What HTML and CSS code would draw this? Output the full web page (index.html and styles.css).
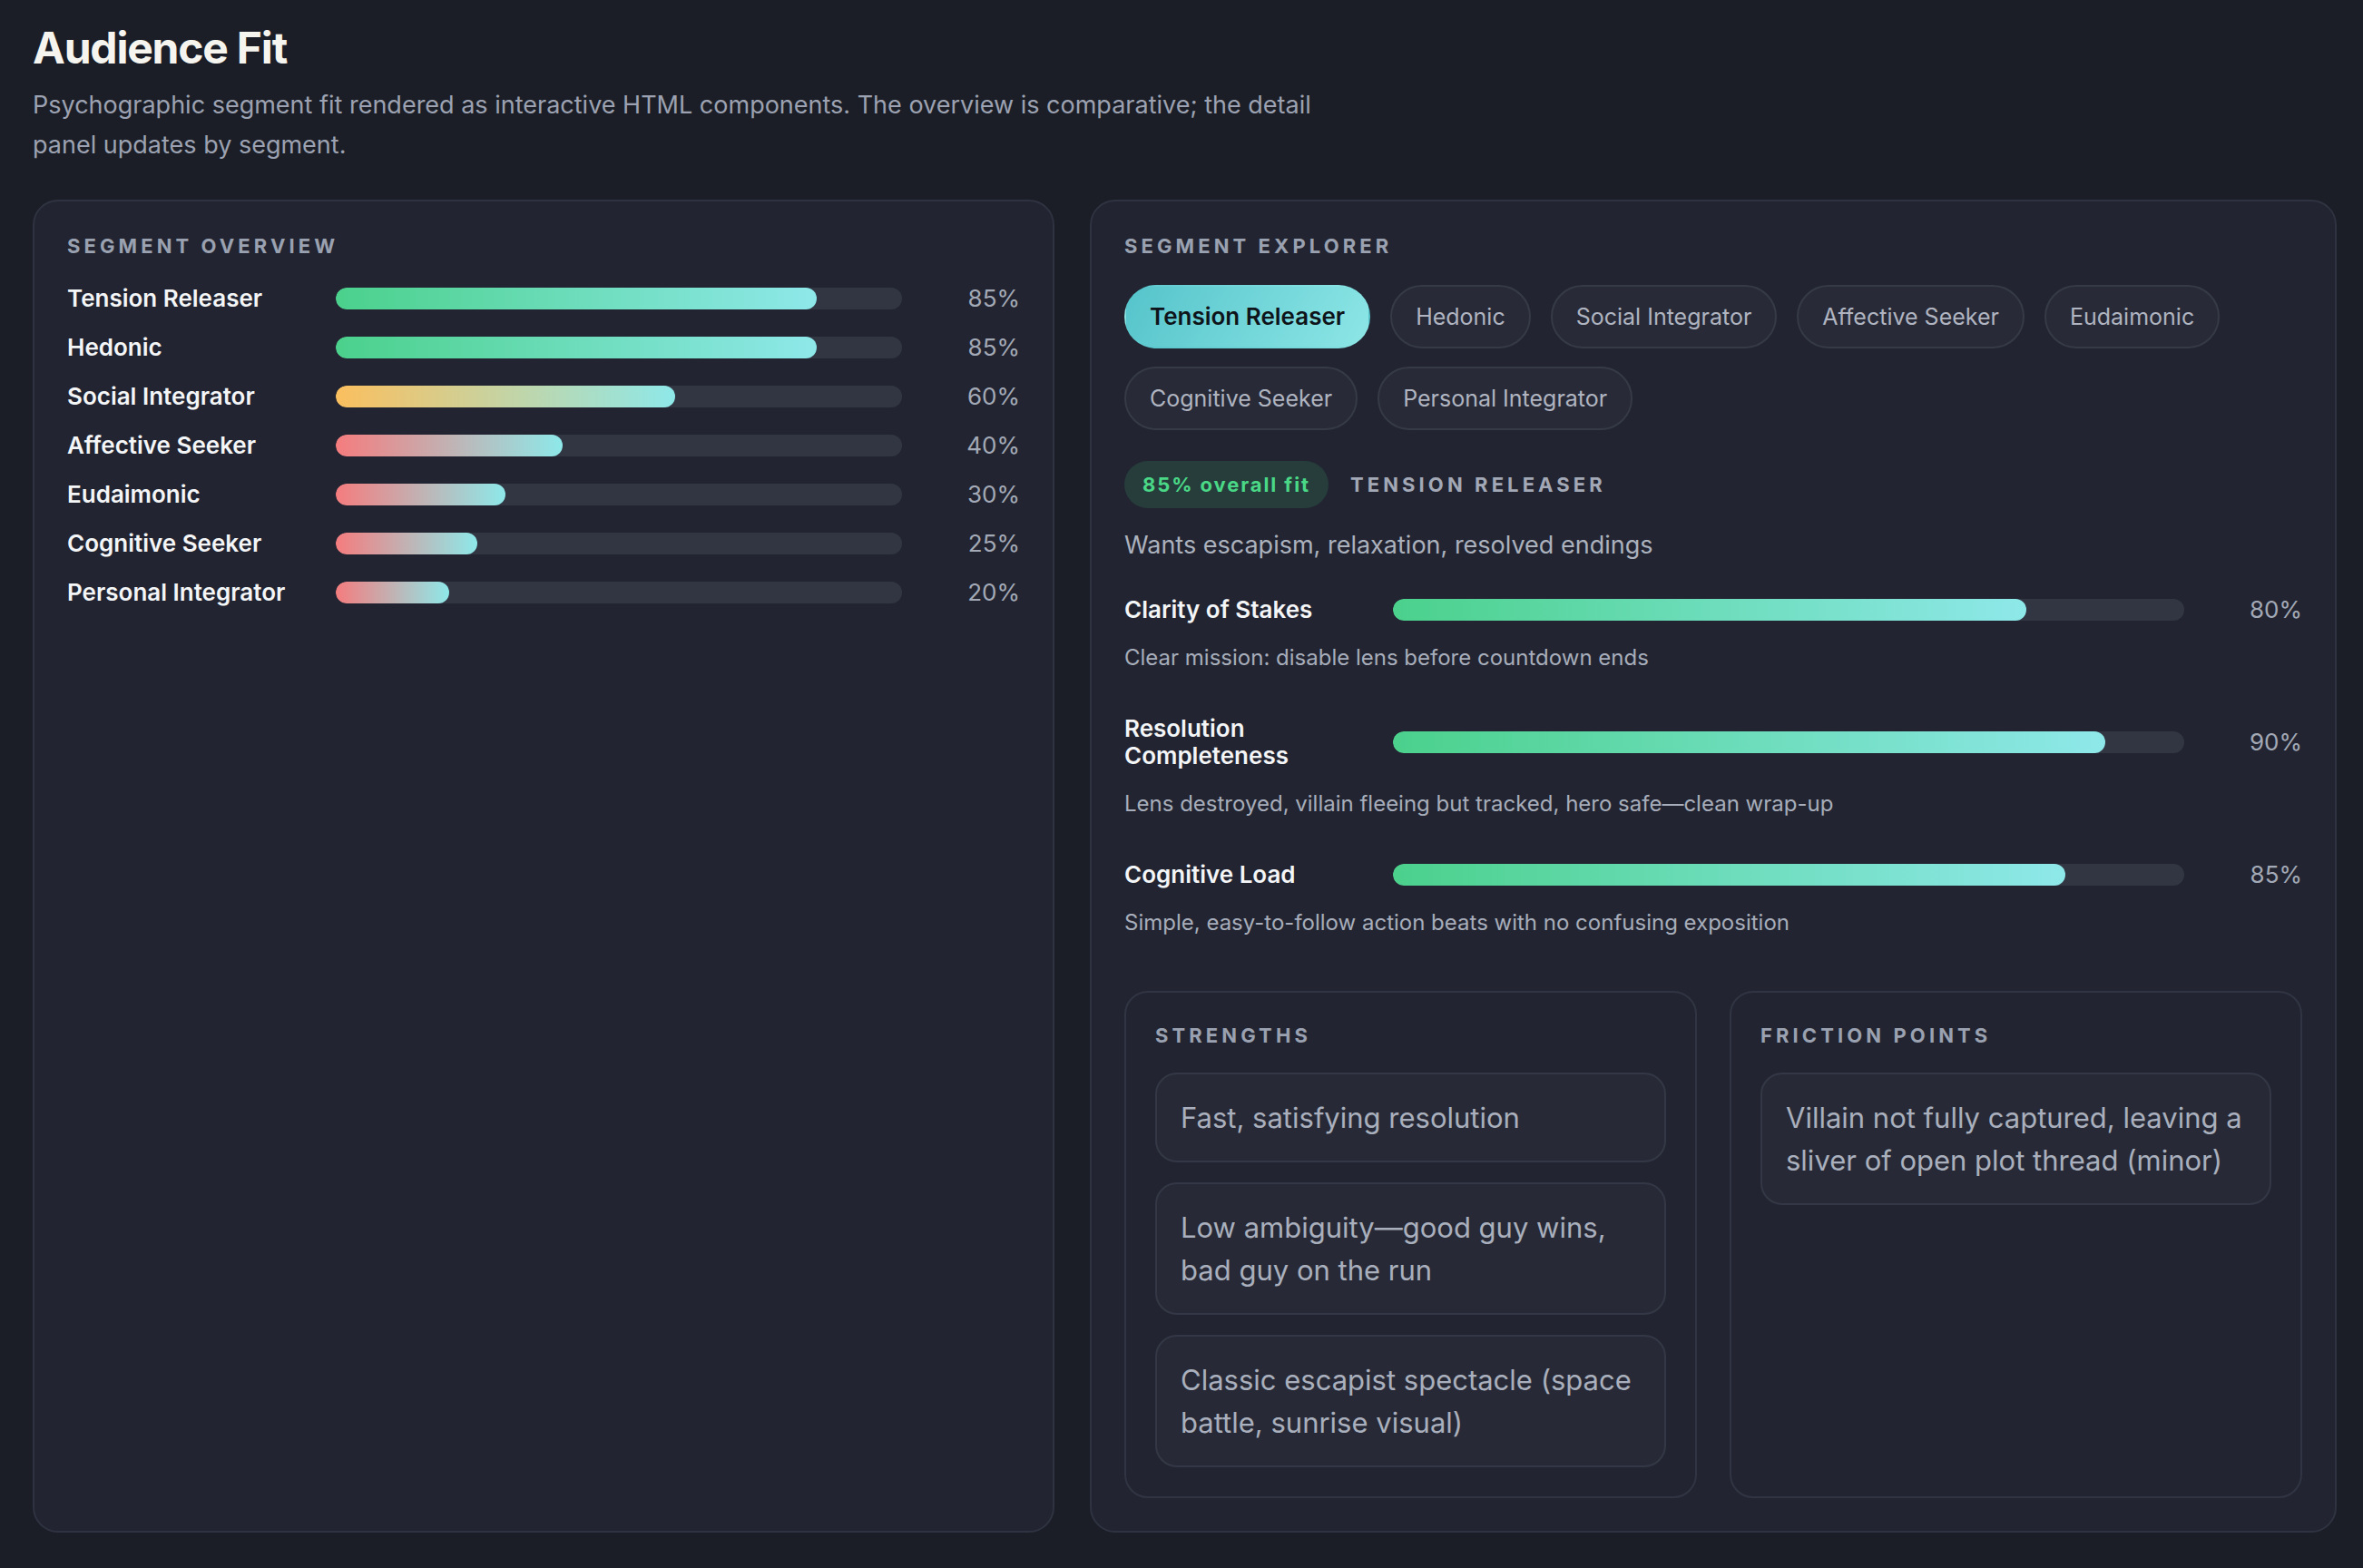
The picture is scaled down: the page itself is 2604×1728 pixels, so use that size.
FILE: index.html
```html
<!DOCTYPE html>
<html lang="en">

<head>
    <meta charset="utf-8">
    <title>Audience Fit</title>
    <link rel="stylesheet" href="styles.css">
</head>

<body>
    <header class="intro">
        <h1>Audience Fit</h1>
        <p>Psychographic segment fit rendered as interactive HTML components. The overview is comparative; the detail panel updates by segment.</p>
    </header>

    <main class="panels">
        <section class="panel">
            <h2 class="label">Segment Overview</h2>
            <div class="rows">
                <div class="row">
                    <span class="name">Tension Releaser</span>
                    <div class="track"><div class="fill hi" style="width:85%"></div></div>
                    <span class="pct">85%</span>
                </div>
                <div class="row">
                    <span class="name">Hedonic</span>
                    <div class="track"><div class="fill hi" style="width:85%"></div></div>
                    <span class="pct">85%</span>
                </div>
                <div class="row">
                    <span class="name">Social Integrator</span>
                    <div class="track"><div class="fill mid" style="width:60%"></div></div>
                    <span class="pct">60%</span>
                </div>
                <div class="row">
                    <span class="name">Affective Seeker</span>
                    <div class="track"><div class="fill lo" style="width:40%"></div></div>
                    <span class="pct">40%</span>
                </div>
                <div class="row">
                    <span class="name">Eudaimonic</span>
                    <div class="track"><div class="fill lo" style="width:30%"></div></div>
                    <span class="pct">30%</span>
                </div>
                <div class="row">
                    <span class="name">Cognitive Seeker</span>
                    <div class="track"><div class="fill lo" style="width:25%"></div></div>
                    <span class="pct">25%</span>
                </div>
                <div class="row">
                    <span class="name">Personal Integrator</span>
                    <div class="track"><div class="fill lo" style="width:20%"></div></div>
                    <span class="pct">20%</span>
                </div>
            </div>
        </section>

        <section class="panel">
            <h2 class="label">Segment Explorer</h2>
            <div class="chips">
                <button class="chip active">Tension Releaser</button>
                <button class="chip">Hedonic</button>
                <button class="chip">Social Integrator</button>
                <button class="chip">Affective Seeker</button>
                <button class="chip">Eudaimonic</button>
                <button class="chip">Cognitive Seeker</button>
                <button class="chip">Personal Integrator</button>
            </div>

            <div class="fit-head">
                <span class="badge">85% overall fit</span>
                <span class="label inline">Tension Releaser</span>
            </div>
            <p class="want">Wants escapism, relaxation, resolved endings</p>

            <div class="metrics">
                <div class="metric">
                    <div class="row">
                        <span class="name">Clarity of Stakes</span>
                        <div class="track"><div class="fill hi" style="width:80%"></div></div>
                        <span class="pct">80%</span>
                    </div>
                    <p class="note">Clear mission: disable lens before countdown ends</p>
                </div>
                <div class="metric">
                    <div class="row">
                        <span class="name">Resolution Completeness</span>
                        <div class="track"><div class="fill hi" style="width:90%"></div></div>
                        <span class="pct">90%</span>
                    </div>
                    <p class="note">Lens destroyed, villain fleeing but tracked, hero safe—clean wrap-up</p>
                </div>
                <div class="metric">
                    <div class="row">
                        <span class="name">Cognitive Load</span>
                        <div class="track"><div class="fill hi" style="width:85%"></div></div>
                        <span class="pct">85%</span>
                    </div>
                    <p class="note">Simple, easy-to-follow action beats with no confusing exposition</p>
                </div>
            </div>

            <div class="boxes">
                <div class="box">
                    <h3 class="label">Strengths</h3>
                    <ul class="items">
                        <li>Fast, satisfying resolution</li>
                        <li>Low ambiguity—good guy wins, bad guy on the run</li>
                        <li>Classic escapist spectacle (space battle, sunrise visual)</li>
                    </ul>
                </div>
                <div class="box">
                    <h3 class="label">Friction Points</h3>
                    <ul class="items">
                        <li>Villain not fully captured, leaving a sliver of open plot thread (minor)</li>
                    </ul>
                </div>
            </div>
        </section>
    </main>
</body>

</html>
```

FILE: styles.css
```css
* {
    box-sizing: border-box;
}

body {
    margin: 0;
    padding: 24px 29px 39px 36px;
    min-height: 100vh;
    display: flex;
    flex-direction: column;
    background-color: #1b1e26;
    color: #e8e9ee;
    font-family: Inter, "Noto Sans", sans-serif;
}

.intro h1 {
    margin: 0;
    font-size: 48px;
    line-height: 58px;
    font-weight: 700;
    color: #f5f4ef;
    letter-spacing: -1.2px;
}

.intro p {
    margin: 12px 0 0;
    max-width: 1470px;
    font-size: 27px;
    line-height: 44px;
    color: #9ca2b1;
}

.panels {
    flex: 1;
    margin-top: 38px;
    display: grid;
    grid-template-columns: 1126fr 1374fr;
    gap: 39px;
}

.panel {
    background-color: #222531;
    border: 2px solid #2f3341;
    border-radius: 28px;
    padding: 36px;
}

.label {
    margin: 0;
    font-size: 22px;
    line-height: 26px;
    font-weight: 700;
    letter-spacing: 4.1px;
    text-transform: uppercase;
    color: #9aa1b0;
}

/* bars */
.rows {
    margin-top: 30px;
    display: flex;
    flex-direction: column;
    gap: 24px;
}

.row {
    display: grid;
    grid-template-columns: 260px 1fr 94px;
    column-gap: 36px;
    align-items: center;
}

.name {
    font-size: 26px;
    line-height: 30px;
    font-weight: 600;
    color: #f4f5f7;
}

.track {
    height: 24px;
    border-radius: 12px;
    background-color: #323643;
    overflow: hidden;
}

.fill {
    height: 100%;
    border-radius: 12px;
}

.fill.hi { background: linear-gradient(90deg, #4bd18c, #8ee8e9); }
.fill.mid { background: linear-gradient(90deg, #fbbf5e, #8ee8e9); }
.fill.lo { background: linear-gradient(90deg, #f57c7e, #8ee8e9); }

.pct {
    text-align: right;
    font-size: 26px;
    line-height: 30px;
    color: #a3a9b6;
}

/* explorer */
.chips {
    margin-top: 30px;
    display: flex;
    flex-wrap: wrap;
    gap: 20px 22px;
}

.chip {
    font-family: inherit;
    font-size: 25px;
    line-height: 32px;
    padding: 17px 26px;
    border-radius: 35px;
    border: 2px solid #363a47;
    background-color: #282b37;
    color: #afb4c0;
    cursor: pointer;
}

.chip.active {
    border-color: transparent;
    background: linear-gradient(120deg, #55c4cb, #8de6e6);
    color: #0e141a;
    font-size: 26px;
    font-weight: 600;
}

.fit-head {
    margin-top: 34px;
    display: flex;
    align-items: center;
    gap: 24px;
}

.badge {
    padding: 12px 20px;
    border-radius: 26px;
    background-color: #263d3c;
    color: #4ad887;
    font-size: 22px;
    line-height: 28px;
    font-weight: 700;
    letter-spacing: 1.9px;
}

.label.inline {
    color: #a2a8b6;
}

.want {
    margin: 20px 0 0;
    font-size: 27px;
    line-height: 42px;
    color: #abb1bd;
}

.metrics {
    margin-top: 35px;
    display: flex;
    flex-direction: column;
    gap: 45px;
}

.note {
    margin: 20px 0 0;
    font-size: 24px;
    line-height: 36px;
    color: #a7adba;
}

.boxes {
    margin-top: 57px;
    display: grid;
    grid-template-columns: 1fr 1fr;
    gap: 36px;
}

.box {
    border: 2px solid #313543;
    border-radius: 26px;
    padding: 32px;
}

.box .label {
    line-height: 30px;
}

.items {
    list-style: none;
    margin: 26px 0 0;
    padding: 0;
    display: flex;
    flex-direction: column;
    gap: 22px;
}

.items li {
    padding: 24px 26px;
    border: 2px solid #343846;
    border-radius: 24px;
    background-color: #272a36;
    font-size: 31px;
    line-height: 47px;
    color: #a9afbc;
}
```
